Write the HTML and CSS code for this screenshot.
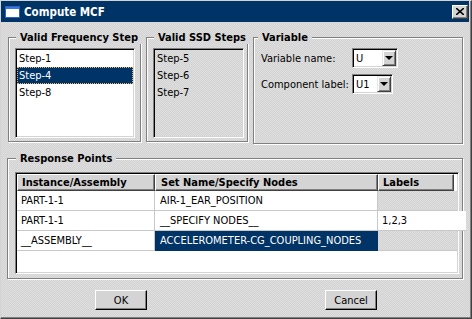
FILE: index.html
```html
<!DOCTYPE html>
<html lang="en">
  <head>
    <meta charset="UTF-8" />
    <title>Compute MCF</title>
    <link rel="stylesheet" href="styles.css">
  </head>
  <body>
    <div class="window">
      <div class="titlebar">
        <svg class="app-icon" width="15" height="12" viewBox="0 0 15 12">
          <rect x="0.5" y="0.5" width="14" height="11" fill="#fff" stroke="#2a62c8" />
          <rect x="1" y="1" width="13" height="2" fill="#3a78e0" />
        </svg>
        <span class="title">Compute MCF</span>
        <button class="close" title="Close">
          <svg width="8" height="7" viewBox="0 0 8 7">
            <path d="M0 0 L8 7 M8 0 L0 7" stroke="#000" stroke-width="1.6" />
          </svg>
        </button>
      </div>

      <div class="content">
        <div class="top-row">
          <fieldset class="group freq">
            <legend>Valid Frequency Step</legend>
            <div class="listbox">
              <div class="item">Step-1</div>
              <div class="item selected">Step-4</div>
              <div class="item">Step-8</div>
            </div>
          </fieldset>

          <fieldset class="group ssd">
            <legend>Valid SSD Steps</legend>
            <div class="listbox disabled">
              <div class="item">Step-5</div>
              <div class="item">Step-6</div>
              <div class="item">Step-7</div>
            </div>
          </fieldset>

          <fieldset class="group variable">
            <legend>Variable</legend>
            <div class="form">
              <label>Variable name:</label>
              <div class="combo name">
                <span class="value">U</span>
                <span class="arrow"></span>
              </div>
              <label>Component label:</label>
              <div class="combo comp">
                <span class="value">U1</span>
                <span class="arrow"></span>
              </div>
            </div>
          </fieldset>
        </div>

        <fieldset class="group response">
          <legend>Response Points</legend>
          <div class="table">
            <div class="row head">
              <div class="cell c1">Instance/Assembly</div>
              <div class="cell c2">Set Name/Specify Nodes</div>
              <div class="cell c3">Labels</div>
            </div>
            <div class="row">
              <div class="cell c1">PART-1-1</div>
              <div class="cell c2">AIR-1_EAR_POSITION</div>
              <div class="cell c3 off"></div>
            </div>
            <div class="row">
              <div class="cell c1">PART-1-1</div>
              <div class="cell c2">__SPECIFY NODES__</div>
              <div class="cell c3 spill">1,2,3</div>
            </div>
            <div class="row">
              <div class="cell c1">__ASSEMBLY__</div>
              <div class="cell c2 selected">ACCELEROMETER-CG_COUPLING_NODES</div>
              <div class="cell c3 off"></div>
            </div>
          </div>
        </fieldset>

        <div class="buttons">
          <button class="btn">OK</button>
          <button class="btn">Cancel</button>
        </div>
      </div>
    </div>
  </body>
</html>
```

FILE: styles.css
```css
body {
  margin: 0;
  font-family: "DejaVu Sans Condensed", "DejaVu Sans", sans-serif;
  font-size: 11px;
  color: #000;
  background: #d4d4d4;
}
.window,
.group legend,
.listbox.disabled,
.cell.off {
  background: repeating-conic-gradient(#d2d2d2 0 25%, #dfdfdf 0 50%) 0 0 / 2px 2px fixed;
}
.window {
  width: 472px;
  height: 319px;
  box-sizing: border-box;
  border: 1px solid;
  border-color: #d4d4d4 #404040 #404040 #d4d4d4;
  box-shadow: inset -1px -1px 0 #808080;
  display: flex;
  flex-direction: column;
}
.titlebar {
  height: 21px;
  margin-right: 2px;
  background: #003366;
  color: #fff;
  display: flex;
  align-items: center;
  padding-left: 4px;
}
.app-icon {
  margin-right: 4px;
}
.title {
  flex-grow: 1;
  font-weight: bold;
  font-size: 11.5px;
}
.close {
  width: 16px;
  height: 14px;
  margin-right: 1px;
  padding: 0;
  background: #d4d4d4;
  border: 1px solid;
  border-color: #fff #404040 #404040 #fff;
  box-shadow: inset -1px -1px 0 #808080;
  display: flex;
  align-items: center;
  justify-content: center;
}
.content {
  padding: 9px 0 0 6px;
  display: flex;
  flex-direction: column;
}

/* group boxes */
.group {
  margin: 0;
  min-width: 0;
  box-sizing: border-box;
  border: 1px solid #808080;
  box-shadow: inset 1px 1px 0 #fff, 1px 1px 0 #fff;
  padding: 4px 4px 3px 6px;
}
.group legend {
  font-weight: bold;
  line-height: 13px;
  white-space: nowrap;
  margin-left: 1px;
  padding: 0 4px 0 4px;
}
.top-row {
  display: flex;
  gap: 5px;
  margin-left: 1px;
  align-items: flex-start;
}
.freq {
  width: 133px;
}
.ssd {
  width: 102px;
}
.variable {
  width: 210px;
  height: 113px;
}
.variable legend {
  margin-left: -2px;
}

/* list boxes */
.listbox {
  height: 90px;
  box-sizing: border-box;
  border: 1px solid;
  border-color: #808080 #fff #fff #808080;
  box-shadow: inset 1px 1px 0 #000, inset -1px -1px 0 #d4d4d4;
  padding: 1px;
  background: #fff;
}
.freq .listbox {
  width: 120px;
}
.ssd .listbox {
  width: 91px;
}
.item {
  height: 17px;
  line-height: 17px;
  padding-left: 2px;
}
.item.selected {
  background: #003366;
  color: #fff;
  outline: 1px dotted #f2b25c;
  outline-offset: -1px;
}

/* variable form */
.form {
  display: grid;
  grid-template-columns: auto auto;
  justify-content: start;
  justify-items: start;
  align-items: center;
  column-gap: 3px;
  row-gap: 6px;
  margin-left: 1px;
}
.combo {
  height: 20px;
  box-sizing: border-box;
  border: 1px solid;
  border-color: #808080 #fff #fff #808080;
  box-shadow: inset 1px 1px 0 #000, inset -1px -1px 0 #d4d4d4;
  background: #fff;
  padding: 1px;
  display: flex;
  align-items: center;
}
.combo.name {
  width: 46px;
}
.combo.comp {
  width: 41px;
}
.combo .value {
  flex-grow: 1;
  padding-left: 2px;
}
.arrow {
  width: 14px;
  height: 16px;
  box-sizing: border-box;
  background: #d4d4d4;
  border: 1px solid;
  border-color: #e8e8e8 #404040 #404040 #e8e8e8;
  box-shadow: inset 1px 1px 0 #fff, inset -1px -1px 0 #808080;
  position: relative;
}
.arrow::after {
  content: "";
  position: absolute;
  left: 2px;
  top: 5px;
  border-left: 4px solid transparent;
  border-right: 4px solid transparent;
  border-top: 4px solid #000;
}

/* response table */
.response {
  width: 456px;
  margin-top: 8px;
  padding: 7px 4px 4px 7px;
}
.table {
  width: 444px;
  height: 102px;
  box-sizing: border-box;
  border: 1px solid;
  border-color: #808080 #fff #fff #808080;
  box-shadow: inset 1px 1px 0 #000, inset -1px -1px 0 #d4d4d4;
  padding: 1px;
  background: #fff;
}
.row {
  display: flex;
  height: 20px;
}
.row.head {
  height: 17px;
}
.cell {
  box-sizing: border-box;
  height: 20px;
  line-height: 19px;
  padding-left: 4px;
  border-right: 1px solid #c8c8c8;
  border-bottom: 1px solid #c8c8c8;
  white-space: nowrap;
  overflow: hidden;
}
.c1 {
  width: 138px;
}
.c2 {
  width: 223px;
  padding-left: 5px;
}
.c3 {
  width: 76px;
  flex-grow: 1;
  border-right: none;
}
.cell.spill {
  margin-right: -9px;
  background: #fff;
}
.cell.selected {
  background: #003366;
  color: #fff;
  border-color: #003366;
}
.head .cell {
  height: 17px;
  line-height: 15px;
  font-weight: bold;
  background: #d4d4d4;
  border: 1px solid;
  border-color: #fff #404040 #404040 #fff;
  box-shadow: inset -1px -1px 0 #808080;
}
.head .c3 {
  flex-grow: 0;
}

/* dialog buttons */
.buttons {
  display: flex;
  justify-content: center;
  gap: 178px;
  margin-top: 11px;
  margin-left: -6px;
}
.btn {
  width: 52px;
  height: 20px;
  padding: 0;
  font-family: inherit;
  font-size: 11px;
  color: #000;
  background: #d4d4d4;
  border: 1px solid;
  border-color: #fff #000 #000 #fff;
  box-shadow: inset -1px -1px 0 #808080;
}
```
